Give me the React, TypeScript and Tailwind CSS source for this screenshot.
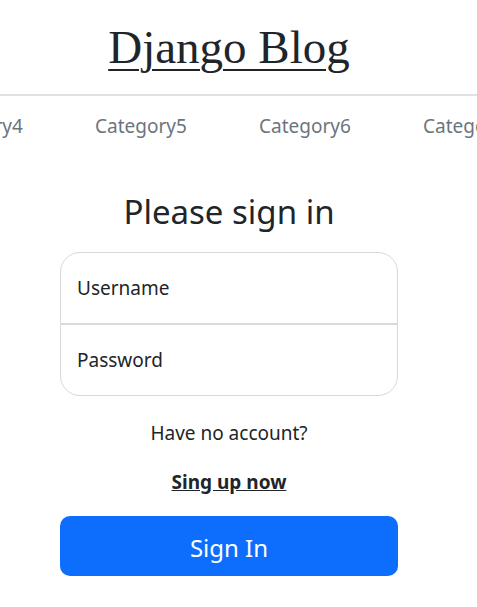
const categories = ['Category4', 'Category5', 'Category6', 'Category7', 'Category8'];

export default function App() {
  return (
    <div className="min-h-screen bg-white text-[#212529]" style={{ fontFamily: '"Noto Sans", "Open Sans", sans-serif' }}>
      {/* header */}
      <header className="border-b-2 border-[#dee2e6] h-[96px]">
        <div className="w-[458px] h-full flex items-center justify-center">
          <a href="#" className="text-[47px] leading-none underline underline-offset-[6px] decoration-2 text-[#212529]" style={{ fontFamily: '"Liberation Serif", "Times New Roman", serif' }}>
            Django Blog
          </a>
        </div>
      </header>

      {/* category scroller */}
      <nav className="overflow-hidden h-[60px]">
        <div className="flex items-center h-full -ml-[69px] gap-[74px] whitespace-nowrap">
          {categories.map((c) => (
            <a key={c} href="#" className="text-[#6c757d] text-[19px] w-[90px] shrink-0">{c}</a>
          ))}
        </div>
      </nav>

      {/* sign in form */}
      <div className="w-[458px]">
        <main className="w-[338px] mx-auto flex flex-col items-stretch pt-[34px]">
          <h1 className="text-center text-[33px] leading-[44px] font-normal mb-[18px]">Please sign in</h1>
          <div className="border border-[#d6d9dd] rounded-[20px] overflow-hidden">
            <div className="h-[72px] flex items-center px-[16px] border-b-2 border-[#d6d9dd]">
              <span className="text-[19px]">Username</span>
            </div>
            <div className="h-[70px] flex items-center px-[16px]">
              <span className="text-[19px]">Password</span>
            </div>
          </div>
          <p className="text-center text-[19px] mt-[23px]">Have no account?</p>
          <a href="#" className="text-center text-[19px] font-bold underline mt-[20px] text-[#212529]">Sing up now</a>
          <button className="mt-[20px] h-[60px] rounded-[10px] bg-[#0d6efd] text-white text-[24px] pt-[3px]">Sign In</button>
        </main>
      </div>
    </div>
  );
}
